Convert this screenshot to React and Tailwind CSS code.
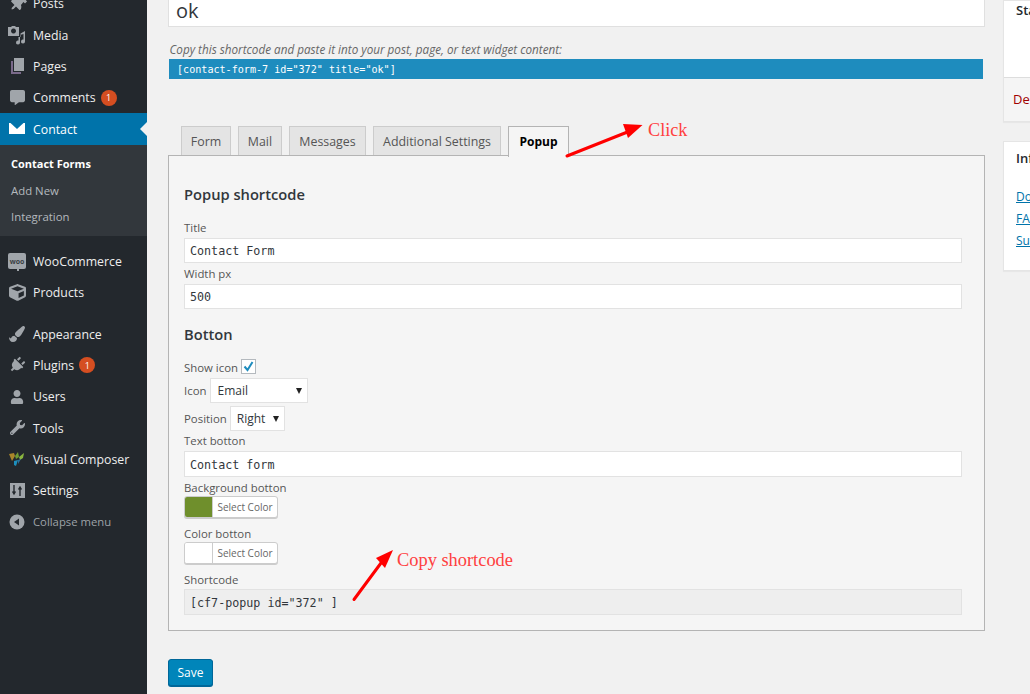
import React from "react";
import { FaThumbtack, FaCommentAlt, FaCube, FaPaintBrush, FaPlug, FaUser, FaWrench } from "react-icons/fa";

const MediaIcon = () => (
  <svg width="20" height="20" viewBox="0 0 20 20" fill="currentColor">
    <path d="M1 2h3l1-1h3l1 1h3v9H1z M6.500 3.500a2.500 2.500 0 1 0 0.010 0z" fillRule="evenodd" />
    <path d="M18 6v10.500a2 2 0 1 1-1.500-1.900V9l-3.500 1v7.500a2 2 0 1 1-1.500-1.900V12h2V8.500z" />
  </svg>
);
const PagesIcon = () => (
  <svg width="20" height="20" viewBox="0 0 20 20" fill="currentColor">
    <path d="M7 2h10v13H7z" />
    <path d="M4 5h2v11h8v2H4z" fill="#7a6a8a" />
  </svg>
);
const EnvelopeIcon = () => (
  <svg width="16" height="11" viewBox="0 0 16 11">
    <path d="M0 0h16v11H0z" fill="#fff" />
    <path d="M1.500 0L8 6l6.500-6z" fill="#0073aa" />
  </svg>
);
const WooIcon = () => (
  <div className="relative flex h-[16px] w-[18px] items-center justify-center rounded-[2px] bg-[#a0a5aa]">
    <span className="text-[7px] font-bold leading-none text-[#3a3f44]">woo</span>
    <span className="absolute -bottom-[2px] left-[9px] h-[3px] w-[2px] bg-[#a0a5aa]" />
  </div>
);
const VcIcon = () => (
  <svg width="16" height="16" viewBox="0 0 16 16">
    <path d="M0 3l5-1 1 3-3 5z" fill="#a9862a" />
    <path d="M6 5l3-4 1 5-3 2z" fill="#6f9b34" />
    <path d="M10 6l5-4-1 5-3 2z" fill="#8ab53f" />
    <path d="M5 10l4-1-2 6-2-1z" fill="#1d8fbd" />
    <path d="M9 9l3-1-3 5z" fill="#2a6f9b" />
  </svg>
);
const SettingsIcon = () => (
  <svg width="15" height="15" viewBox="0 0 15 15">
    <rect width="15" height="15" fill="#a0a5aa" />
    <path d="M4 2v8M2.500 8.500L4 11l1.500-2.500M10 13V5M8.500 6.500L10 4l1.500 2.500" stroke="#23282d" strokeWidth="1.400" fill="none" />
  </svg>
);
const CollapseIcon = () => (
  <svg width="16" height="16" viewBox="0 0 16 16">
    <circle cx="8" cy="8" r="7.500" fill="#a0a5aa" />
    <path d="M10 4.500v7L5 8z" fill="#23282d" />
  </svg>
);

function Item({ icon, label, badge }) {
  return (
    <div className="flex h-[31.33px] items-center text-[12.300px] text-[#eeeeee]">
      <div className="flex w-[33px] shrink-0 items-center justify-center pl-[1px] text-[#a0a5aa]">{icon}</div>
      <span className="pt-[2px]">{label}</span>
      {badge && (
        <span className="ml-[5px] flex h-[16px] w-[16px] items-center justify-center rounded-full bg-[#d54e21] text-[9px] text-white">1</span>
      )}
    </div>
  );
}

const TextInput = ({ value, muted, h = "h-[25px]" }) => (
  <div className={`flex items-center border border-[#e2e2e2] pl-[5px] pt-[3px] font-['DejaVu_Sans_Mono',monospace] text-[11.700px] text-[#32373c] ${h} ${muted ? "bg-[#eeeeee]" : "bg-white"}`}>
    {value}
  </div>
);

const Label = ({ children, className = "" }) => (
  <div className={`text-[11.400px] leading-[14px] text-[#555555] ${className}`}>{children}</div>
);

const Select = ({ value, w }) => (
  <div className={`flex h-[25px] items-center justify-between border border-[#e2e2e2] bg-white pl-[6px] pr-[5px] text-[12px] text-[#32373c] ${w}`}>
    <span>{value}</span>
    <span className="h-0 w-0 border-x-[3px] border-t-[6px] border-x-transparent border-t-[#222222]" />
  </div>
);

const ColorBtn = ({ color }) => (
  <div className="flex h-[22px] w-[94px] overflow-hidden rounded-[3px] border border-[#cccccc] bg-white shadow-[0_1px_0_#cccccc]">
    <div className="w-[28px] border-r border-[#cccccc]" style={{ background: color }} />
    <div className="flex flex-1 items-center justify-center text-[10px] text-[#666666]">Select Color</div>
  </div>
);

const Tab = ({ children, w, active }) =>
  active ? (
    <div className={`relative z-10 -mb-[2px] flex h-[31px] items-center justify-center border border-b-0 border-[#b4b4b4] bg-[#f5f5f5] text-[12px] font-bold text-[#000000] ${w}`}>{children}</div>
  ) : (
    <div className={`flex h-[29px] items-center justify-center border border-b-0 border-[#cccccc] bg-[#e4e4e4] pt-[2px] text-[12.400px] text-[#555555] ${w}`}>{children}</div>
  );

export default function App() {
  return (
    <div className="relative flex h-[694px] w-[1030px] overflow-hidden bg-[#f1f1f1] font-['Open_Sans','Noto_Sans',sans-serif]">
      <aside className="w-[147px] shrink-0 bg-[#23282d]">
        <div className="-mt-[12px]">
          <Item icon={<FaThumbtack size={17} className="rotate-45" />} label="Posts" />
          <Item icon={<MediaIcon />} label="Media" />
          <Item icon={<PagesIcon />} label="Pages" />
          <Item icon={<FaCommentAlt size={15} />} label="Comments" badge />
          <div className="relative flex h-[31.33px] items-center bg-[#0073aa] text-[12.300px] text-white">
            <div className="flex w-[33px] shrink-0 justify-center"><EnvelopeIcon /></div>
            <span className="pt-[2px]">Contact</span>
            <span className="absolute right-0 top-[9px] h-0 w-0 border-y-[7px] border-r-[7px] border-y-transparent border-r-[#f1f1f1]" />
          </div>
          <div className="flex h-[91px] flex-col justify-center bg-[#32373c] pl-[11px] text-[11.400px] text-[#b4b9be]">
            <div className="flex h-[26px] items-center pt-[1px] text-[11px] font-bold text-white">Contact Forms</div>
            <div className="flex h-[26px] items-center">Add New</div>
            <div className="flex h-[26px] items-center">Integration</div>
          </div>
          <div className="mt-[10px]">
            <Item icon={<WooIcon />} label="WooCommerce" />
            <Item icon={<FaCube size={17} />} label="Products" />
          </div>
          <div className="mt-[10px]">
            <Item icon={<FaPaintBrush size={16} />} label="Appearance" />
            <Item icon={<FaPlug size={16} className="rotate-45" />} label="Plugins" badge />
            <Item icon={<FaUser size={14} />} label="Users" />
            <Item icon={<FaWrench size={15} />} label="Tools" />
            <Item icon={<VcIcon />} label="Visual Composer" />
            <Item icon={<SettingsIcon />} label="Settings" />
            <div className="flex h-[31.33px] items-center text-[11.300px] text-[#9ea3a8]">
              <div className="flex w-[33px] shrink-0 justify-center pl-[1px]"><CollapseIcon /></div>
              <span className="pt-[2px]">Collapse menu</span>
            </div>
          </div>
        </div>
      </aside>

      <main className="ml-[21px] w-[817px] shrink-0">
        <div className="flex h-[27px] items-end border border-t-0 border-[#e0e0e0] bg-white pb-[2px] pl-[7px] text-[20px] leading-[26px] text-[#32373c]">ok</div>
        <div className="ml-[1.500px] mt-[15px] text-[11.700px] italic leading-[14px] text-[#666666]">Copy this shortcode and paste it into your post, page, or text widget content:</div>
        <div className="ml-[1px] mt-[3px] flex h-[20px] w-[814px] items-center bg-[#1e8cbe] pl-[8px] pt-[1px] font-['DejaVu_Sans_Mono',monospace] text-[10.100px] text-white">[contact-form-7 id="372" title="ok"]</div>

        <div className="mt-[47px] flex items-end pl-[13px]">
          <div className="flex items-end gap-[7px]">
            <Tab w="w-[50px]">Form</Tab>
            <Tab w="w-[44px]">Mail</Tab>
            <Tab w="w-[77px]">Messages</Tab>
            <Tab w="w-[128px]">Additional Settings</Tab>
            <Tab w="w-[61px]" active>Popup</Tab>
          </div>
        </div>

        <div className="h-[476px] border border-[#b4b4b4] bg-[#f5f5f5] pl-[15px] pr-[22px]">
          <h2 className="mt-[28px] text-[14.700px] font-semibold leading-[20px] text-[#32373c]">Popup shortcode</h2>
          <Label className="mb-[3px] mt-[17px]">Title</Label>
          <TextInput value="Contact Form" />
          <Label className="mb-[3px] mt-[4px]">Width px</Label>
          <TextInput value="500" />
          <h2 className="mt-[15px] text-[14.700px] font-semibold leading-[20px] text-[#32373c]">Botton</h2>
          <div className="mt-[15px] flex h-[15px] items-center gap-[3px]">
            <Label className="translate-y-[1px]">Show icon</Label>
            <div className="flex h-[15px] w-[15px] items-center justify-center border border-[#b4b9be] bg-white">
              <svg width="13" height="13" viewBox="0 0 13 13"><path d="M2.500 6.500l3 3.500 5-8" stroke="#1e8cbe" strokeWidth="2" fill="none" /></svg>
            </div>
          </div>
          <div className="mt-[4px] flex items-center gap-[4px]">
            <Label>Icon</Label>
            <Select value="Email" w="w-[98px]" />
          </div>
          <div className="mt-[3px] flex items-center gap-[3px]">
            <Label>Position</Label>
            <Select value="Right" w="w-[55px]" />
          </div>
          <Label className="mb-[3px] mt-[3px]">Text botton</Label>
          <TextInput value="Contact form" h="h-[26px]" />
          <Label className="mb-[1px] mt-[4px]">Background botton</Label>
          <ColorBtn color="#6f8f2c" />
          <Label className="mb-[1px] mt-[9px]">Color botton</Label>
          <ColorBtn color="#ffffff" />
          <Label className="mb-[2px] mt-[9px]">Shortcode</Label>
          <TextInput value='[cf7-popup id="372" ]' muted h="h-[26px]" />
        </div>

        <button className="mt-[28px] flex h-[27px] w-[45px] items-center justify-center rounded-[3px] border border-[#006799] bg-[#0085ba] text-[12px] text-white shadow-[0_1px_0_#006799]">Save</button>
      </main>

      <aside className="ml-[18px] w-[280px] shrink-0 text-[13px] text-[#23282d]">
        <div className="border border-[#e5e5e5] bg-white shadow-[0_1px_1px_rgba(0,0,0,0.04)]">
          <div className="h-[76px] pl-[12px] font-semibold">Status</div>
          <div className="flex h-[44px] items-center border-t border-[#dddddd] bg-[#f5f5f5] pl-[9px] text-[#a00000]">Delete</div>
        </div>
        <div className="mt-[19px] h-[130px] border border-[#e5e5e5] bg-white pl-[12px] pt-[7px] shadow-[0_1px_1px_rgba(0,0,0,0.04)]">
          <div className="font-semibold">Information</div>
          <div className="mt-[19px] flex flex-col gap-[4px] text-[12px] leading-[18px] text-[#0073aa] underline">
            <span>Docs</span>
            <span>FAQ</span>
            <span>Support</span>
          </div>
        </div>
      </aside>

      <svg className="pointer-events-none absolute left-0 top-0 z-20" width="1030" height="694">
        <path d="M567 156L630 131" stroke="#ff0000" strokeWidth="3" strokeLinecap="round" />
        <path d="M642.500 125L623 124L628 138z" fill="#ff0000" />
        <path d="M354 599.500L381 563" stroke="#ff0000" strokeWidth="3" strokeLinecap="round" />
        <path d="M393 550L376 558L385 568z" fill="#ff0000" />
      </svg>
      <span className="absolute left-[648px] top-[119px] font-['Liberation_Serif',serif] text-[18.200px] leading-[22px] text-[#ff4040]">Click</span>
      <span className="absolute left-[397px] top-[549px] font-['Liberation_Serif',serif] text-[18.400px] leading-[22px] text-[#ff4040]">Copy shortcode</span>
    </div>
  );
}
